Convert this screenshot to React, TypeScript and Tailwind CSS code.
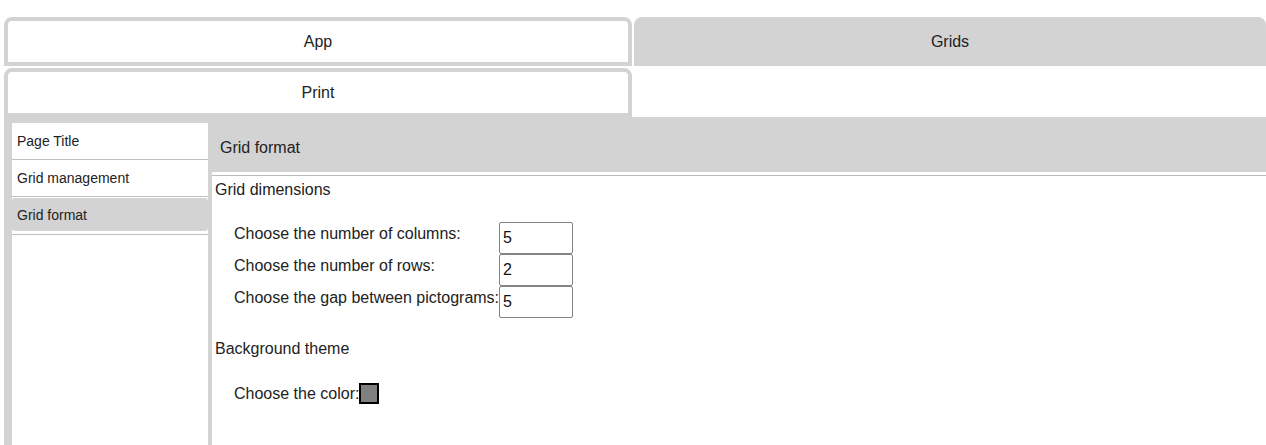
import React from 'react';

const Tab = ({ label, active, width }: { label: string; active?: boolean; width: string }) => (
    <div
        className={`${width} h-[49px] border-4 border-[#d3d3d3] rounded-t-[8px] flex items-center justify-center text-[16px] ${
            active ? 'bg-white' : 'bg-[#d3d3d3]'
        }`}
    >
        {label}
    </div>
);

const navItems = ['Page Title', 'Grid management', 'Grid format'];

const App = () => {
    const selected = 2;

    return (
        <div className="min-h-screen bg-white font-['Liberation_Sans',Arial,sans-serif] text-[#222]">
            {/* tabs */}
            <div className="pt-[17px] pl-1 flex flex-wrap gap-x-[2px] gap-y-[2px]">
                <Tab label="App" active width="w-[628px]" />
                <Tab label="Grids" width="w-[632px]" />
                <Tab label="Print" active width="w-[628px]" />
            </div>

            <div className="ml-1 flex bg-[#d3d3d3] h-[328px]">
                {/* side menu */}
                <ul className="ml-2 mt-[6px] w-[196px] bg-white text-[14px] leading-[16px]">
                    {navItems.map((item, i) => (
                        <li key={item} className="h-[37px] border-b border-[#c0c0c0]">
                            {i === selected ? (
                                <div className="mt-[1px] h-[33px] bg-[#d3d3d3] rounded-[3px] pl-[5px] flex items-center">
                                    {item}
                                </div>
                            ) : (
                                <div className="h-full pl-[5px] flex items-center">{item}</div>
                            )}
                        </li>
                    ))}
                </ul>

                {/* content */}
                <div className="ml-1 flex-1 flex flex-col">
                    <div className="h-[55px] pl-2 pt-[7px] flex items-center text-[16px]">Grid format</div>
                    <div className="flex-1 bg-white pt-[3px]">
                        <div className="border-t border-[#bbb] pl-[3px] pt-[5px] text-[16px] leading-[18px]">
                            <div>Grid dimensions</div>

                            <div className="mt-[23px] ml-[19px] grid grid-cols-[auto_auto] justify-start">
                                {[
                                    ['Choose the number of columns:', '5'],
                                    ['Choose the number of rows:', '2'],
                                    ['Choose the gap between pictograms:', '5'],
                                ].map(([label, value]) => (
                                    <React.Fragment key={label}>
                                        <label className="pt-[3px]">{label}</label>
                                        <input
                                            defaultValue={value}
                                            className="w-[74px] h-[32px] border border-[#858585] rounded-[2px] px-[3px] text-[16px] text-[#111] outline-none"
                                        />
                                    </React.Fragment>
                                ))}
                            </div>

                            <div className="mt-[22px]">Background theme</div>

                            <div className="mt-[25px] ml-[19px] flex items-start">
                                <span className="pt-[2px]">Choose the color:</span>
                                <div className="w-[20px] h-[21px] border-2 border-black bg-[#808080]" />
                            </div>
                        </div>
                    </div>
                </div>
            </div>
        </div>
    );
};

export default App;
